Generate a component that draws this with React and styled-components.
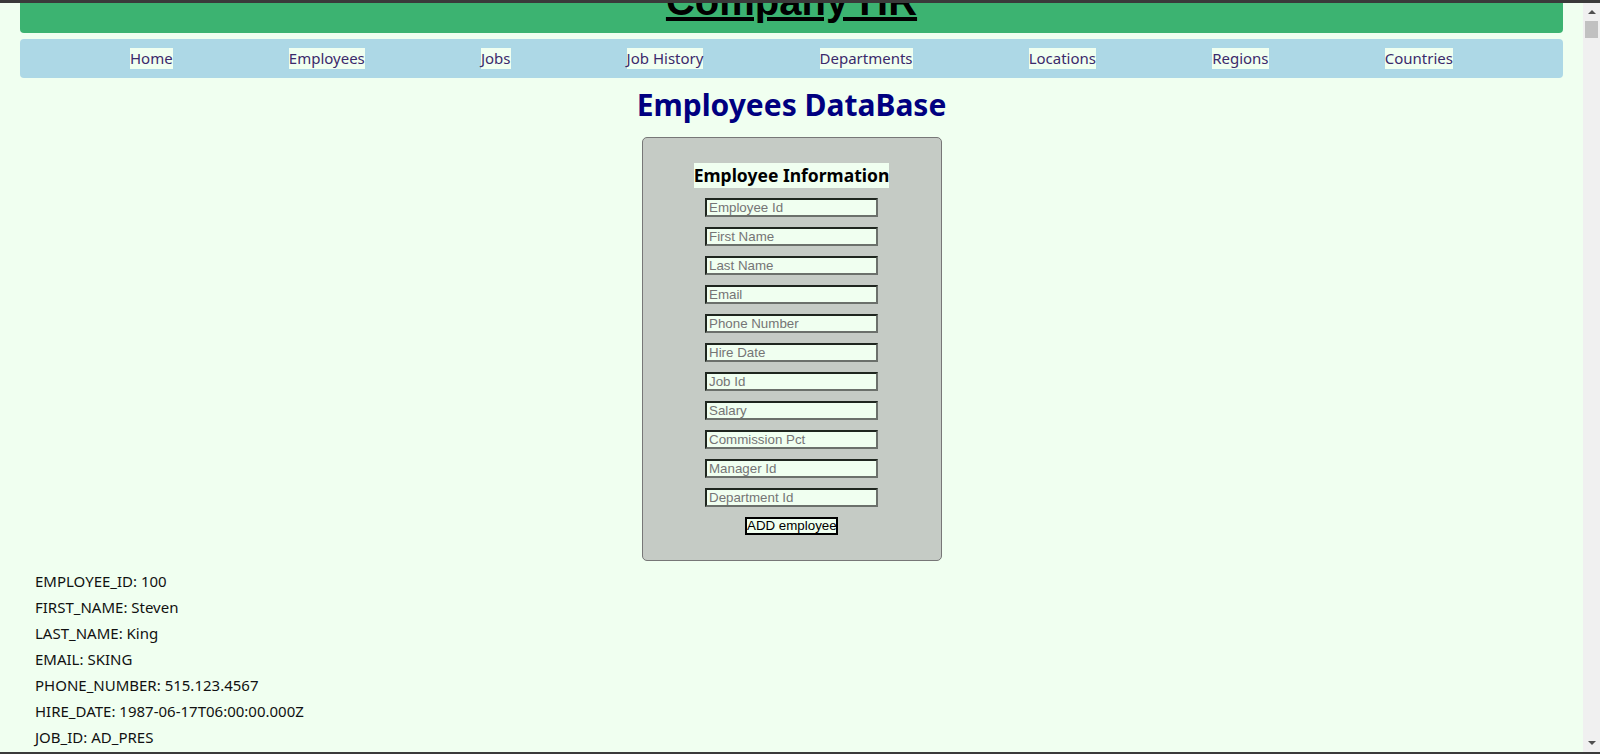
import { useEffect } from "react"
import styled, { createGlobalStyle } from "styled-components"

const GlobalStyle = createGlobalStyle`
  html, body {
    margin: 0;
    padding: 0;
    background: #f0fff0;
    font-family: "Noto Sans", "Open Sans", sans-serif;
  }
  /* window frame lines seen in the screenshot */
  body::before, body::after {
    content: "";
    position: fixed;
    left: 0;
    right: 0;
    background: #3a3a3a;
    z-index: 10;
  }
  body::before {
    top: 0;
    height: 3px;
  }
  body::after {
    bottom: 0;
    height: 2px;
  }
`

// the browser's own scrollbar, drawn since the headless one is hidden
const Scrollbar = styled.div`
  position: fixed;
  top: 3px;
  right: 0;
  bottom: 2px;
  width: 17px;
  background: #f0f0f0;
  display: flex;
  flex-direction: column;
  align-items: center;
  justify-content: space-between;
  z-index: 5;
`

const Arrow = styled.span`
  width: 0;
  height: 0;
  margin: ${(p) => (p.$down ? "0 0 7px" : "7px 0 0")};
  border-left: 4px solid transparent;
  border-right: 4px solid transparent;
  border-bottom: ${(p) => (p.$down ? "0" : "4px solid #505050")};
  border-top: ${(p) => (p.$down ? "4px solid #505050" : "0")};
`

const Thumb = styled.span`
  position: absolute;
  top: 18px;
  left: 2px;
  width: 13px;
  height: 17px;
  background: #c1c1c1;
`

const Page = styled.div`
  margin-right: 17px;
  padding: 8px 20px 40px;
`

const Header = styled.header`
  background: #3cb371;
  border-radius: 4px;
  padding: 8px 0 9px;
  text-align: center;
  h1 {
    margin: 0;
    font-family: "Liberation Sans", Arial, sans-serif;
    font-size: 40px;
    line-height: 46px;
    font-weight: bold;
  }
  a {
    color: #000;
    text-decoration: underline;
  }
`

const Nav = styled.nav`
  margin-top: 6px;
  background: #add8e6;
  border-radius: 4px;
  padding: 9px 110px;
  display: flex;
  justify-content: space-between;
`

const NavLink = styled.a`
  background: #f0fff0;
  color: #3b2a6b;
  font-size: 15px;
  line-height: 21px;
  text-decoration: none;
`

const Title = styled.h1`
  margin: 7px 0 12px;
  text-align: center;
  color: #000080;
  font-size: 30px;
  line-height: 40px;
  font-weight: bold;
`

const FormBox = styled.form`
  width: 300px;
  box-sizing: border-box;
  margin: 0 auto;
  padding: 25px 0;
  background: #c5cbc5;
  border: 1px solid #777;
  border-radius: 5px;
  display: flex;
  flex-direction: column;
  align-items: center;
  gap: 10px;
`

const FormTitle = styled.h3`
  margin: 0;
  background: #f0fff0;
  color: #000;
  font-size: 17.5px;
  line-height: 25px;
  font-weight: bold;
`

const Field = styled.input`
  width: 173px;
  height: 19px;
  box-sizing: border-box;
  margin: 0;
  padding: 0 2px;
  background: #f0fff0;
  border: 2px solid;
  border-color: #1f261f #6b706b #6b706b #1f261f;
  font-family: "Liberation Sans", Arial, sans-serif;
  font-size: 13.33px;
  &::placeholder {
    color: #757575;
  }
`

const AddButton = styled.button`
  width: 93px;
  height: 18px;
  box-sizing: border-box;
  margin: 0;
  padding: 0;
  background: #f0fff0;
  border: 2px solid #000;
  color: #000;
  font-family: "Liberation Sans", Arial, sans-serif;
  font-size: 13.33px;
  line-height: 14px;
  white-space: nowrap;
`

const Records = styled.div`
  margin-top: 7px;
  padding-left: 15px;
`

const Record = styled.div`
  margin-bottom: 26px;
`

const Line = styled.div`
  font-size: 15px;
  line-height: 26px;
  color: #111;
`

const fields = [
  "Employee Id",
  "First Name",
  "Last Name",
  "Email",
  "Phone Number",
  "Hire Date",
  "Job Id",
  "Salary",
  "Commission Pct",
  "Manager Id",
  "Department Id",
]

const links = ["Home", "Employees", "Jobs", "Job History", "Departments", "Locations", "Regions", "Countries"]

const employees = [
  {
    EMPLOYEE_ID: 100, FIRST_NAME: "Steven", LAST_NAME: "King", EMAIL: "SKING",
    PHONE_NUMBER: "515.123.4567", HIRE_DATE: "1987-06-17T06:00:00.000Z", JOB_ID: "AD_PRES",
    SALARY: 24000, COMMISSION_PCT: "", MANAGER_ID: "", DEPARTMENT_ID: 90,
  },
  {
    EMPLOYEE_ID: 101, FIRST_NAME: "Neena", LAST_NAME: "Kochhar", EMAIL: "NKOCHHAR",
    PHONE_NUMBER: "515.123.4568", HIRE_DATE: "1989-09-21T05:00:00.000Z", JOB_ID: "AD_VP",
    SALARY: 17000, COMMISSION_PCT: "", MANAGER_ID: 100, DEPARTMENT_ID: 90,
  },
]

export default function App() {
  // the screenshot is taken a little scrolled down
  useEffect(() => {
    window.scrollTo(0, 38)
  }, [])

  return (
    <>
      <GlobalStyle />
      <Page>
        <Header>
          <h1><a href="#">Company HR</a></h1>
        </Header>
        <Nav>
          {links.map((l) => (
            <NavLink key={l} href="#">{l}</NavLink>
          ))}
        </Nav>
        <Title>Employees DataBase</Title>
        <FormBox onSubmit={(e) => e.preventDefault()}>
          <FormTitle>Employee Information</FormTitle>
          {fields.map((f) => (
            <Field key={f} type="text" placeholder={f} />
          ))}
          <AddButton type="submit">ADD employee</AddButton>
        </FormBox>
        <Records>
          {employees.map((emp) => (
            <Record key={emp.EMPLOYEE_ID}>
              {Object.entries(emp).map(([k, v]) => (
                <Line key={k}>{k}: {v}</Line>
              ))}
            </Record>
          ))}
        </Records>
      </Page>
      <Scrollbar>
        <Arrow />
        <Thumb />
        <Arrow $down />
      </Scrollbar>
    </>
  )
}
